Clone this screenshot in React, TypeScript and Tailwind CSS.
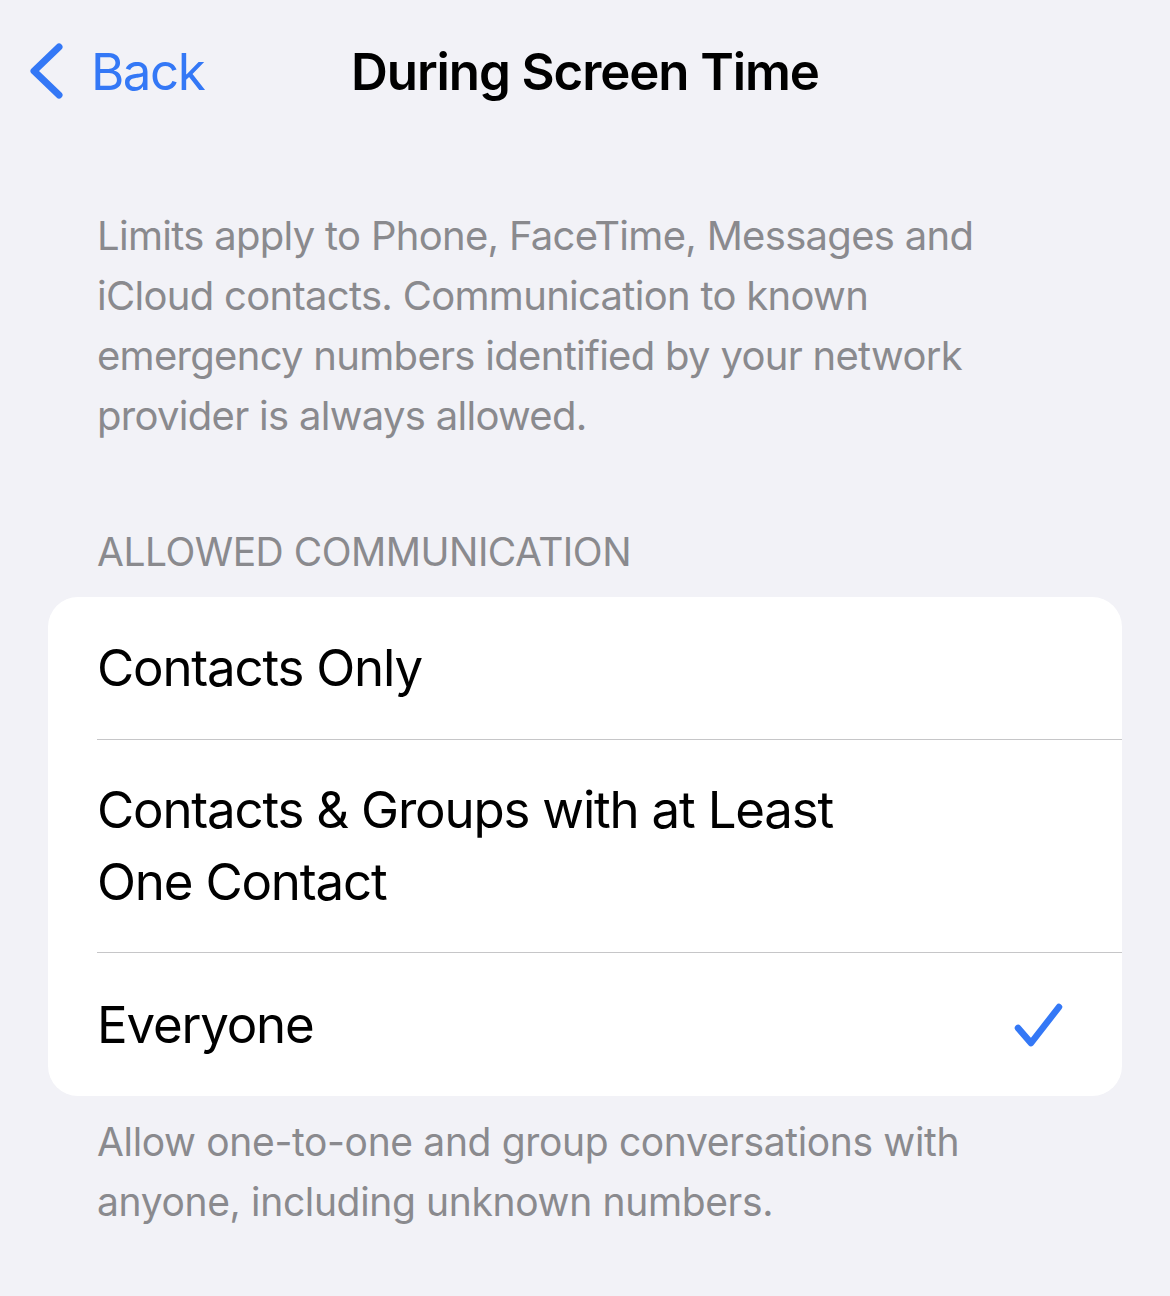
export default function App() {
  const font = { fontFamily: 'Inter, "Noto Sans", sans-serif' };
  return (
    <div className="min-h-[1296px] w-[1170px] bg-[#f2f2f7] text-black" style={font}>
      {/* navigation bar */}
      <div className="relative flex h-[142px] items-center">
        <div className="flex items-center pl-[28px] text-[#3478f6]">
          <svg width="36" height="56" viewBox="0 0 36 56" fill="none">
            <path d="M31 4 L6 28 L31 52" stroke="#3478f6" strokeWidth="7" strokeLinecap="round" strokeLinejoin="round" />
          </svg>
          <span className="ml-[27px] text-[51px] leading-none tracking-[-1.5px]">Back</span>
        </div>
        <div className="absolute left-0 right-0 top-0 flex h-[142px] items-center justify-center">
          <span className="text-[51px] font-semibold leading-none tracking-[-1.1px]">During Screen Time</span>
        </div>
      </div>

      <p className="mt-[64px] pl-[97px] pr-[185px] text-[40px] leading-[60px] text-[#8a8a8e] tracking-[-0.7px]">
        Limits apply to Phone, FaceTime, Messages and iCloud contacts. Communication to known emergency numbers identified by your network provider is always allowed.
      </p>

      <div className="mt-[82px] px-[97px] text-[39px] leading-[48px] uppercase text-[#8a8a8e] tracking-[-0.5px]">
        Allowed Communication
      </div>

      <div className="mx-[48px] mt-[21px] overflow-hidden rounded-[30px] bg-white">
        <div className="flex h-[142px] items-center pl-[49px] text-[51px] leading-[72px] tracking-[-1.2px]">Contacts Only</div>
        <div className="ml-[49px] h-px bg-[#c6c6c8]" />
        <div className="flex h-[212px] items-center pl-[49px] text-[51px] leading-[72px] tracking-[-1.2px]">
          <span className="w-[780px]">Contacts &amp; Groups with at Least One Contact</span>
        </div>
        <div className="ml-[49px] h-px bg-[#c6c6c8]" />
        <div className="flex h-[143px] items-center justify-between pl-[49px] pr-[58px] text-[51px] leading-[72px] tracking-[-1.2px]">
          <span>Everyone</span>
          <svg width="50" height="46" viewBox="0 0 50 46" fill="none">
            <path d="M4 26 L17 41 L45 5" stroke="#3478f6" strokeWidth="6.5" strokeLinecap="round" strokeLinejoin="round" />
          </svg>
        </div>
      </div>

      <p className="mt-[16px] pl-[97px] pr-[60px] text-[39px] leading-[60px] text-[#8a8a8e] tracking-[-0.35px]">
        Allow one-to-one and group conversations with anyone, including unknown numbers.
      </p>
    </div>
  );
}
